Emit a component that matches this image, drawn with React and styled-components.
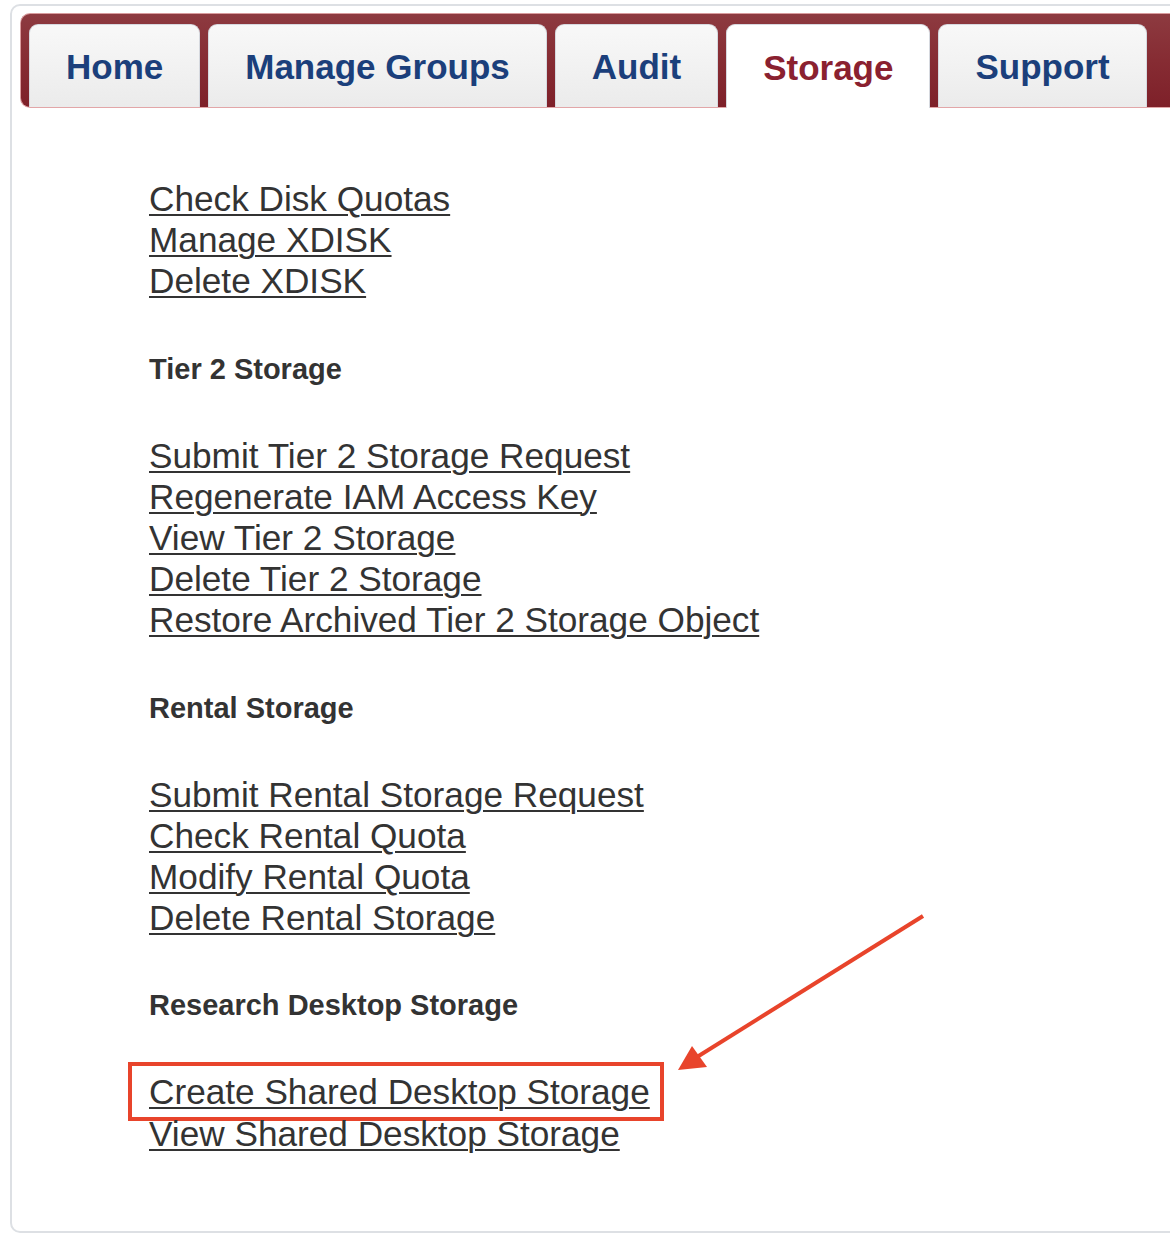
import React from "react"
import styled, { createGlobalStyle } from "styled-components"

const GlobalStyle = createGlobalStyle`
  html, body {
    margin: 0;
    padding: 0;
    background: #fff;
    overflow: hidden;
  }
  body {
    font-family: "Liberation Sans", Arial, sans-serif;
    color: #333;
  }
`

const tabs = ["Home", "Manage Groups", "Audit", "Storage", "Support"]

const sections = [
  {
    title: null,
    links: ["Check Disk Quotas", "Manage XDISK", "Delete XDISK"],
  },
  {
    title: "Tier 2 Storage",
    links: [
      "Submit Tier 2 Storage Request",
      "Regenerate IAM Access Key",
      "View Tier 2 Storage",
      "Delete Tier 2 Storage",
      "Restore Archived Tier 2 Storage Object",
    ],
  },
  {
    title: "Rental Storage",
    links: [
      "Submit Rental Storage Request",
      "Check Rental Quota",
      "Modify Rental Quota",
      "Delete Rental Storage",
    ],
  },
  {
    title: "Research Desktop Storage",
    links: ["Create Shared Desktop Storage", "View Shared Desktop Storage"],
  },
]

const highlighted = "Create Shared Desktop Storage"

const App = () => (
  <Page>
    <GlobalStyle />
    <Frame>
      <TabBar>
        {tabs.map(t => (
          <Tab key={t} active={t === "Storage"}>{t}</Tab>
        ))}
      </TabBar>
      <Content>
        {sections.map((s, i) => (
          <React.Fragment key={i}>
            {s.title && <SectionTitle>{s.title}</SectionTitle>}
            <LinkList>
              {s.links.map(l => (
                <LinkItem key={l} highlight={l === highlighted}>
                  <NavLink href="#">{l}</NavLink>
                </LinkItem>
              ))}
            </LinkList>
          </React.Fragment>
        ))}
      </Content>
    </Frame>
    <Arrow width="1170" height="1248" viewBox="0 0 1170 1248">
      <line x1="923" y1="916" x2="697" y2="1057" stroke="#e8442b" strokeWidth="4" />
      <polygon points="678,1070 692,1046 707,1067" fill="#e8442b" />
    </Arrow>
  </Page>
)

export default App

const Page = styled.div`
  position: relative;
  width: 1170px;
  height: 1248px;
  padding: 4px 0 0 10px;
  box-sizing: border-box;
`

const Frame = styled.div`
  margin-right: -40px;
  border: 2px solid #dde0e4;
  border-radius: 10px;
  padding: 7px 0 0 8px;
  background: #fff;
`

const TabBar = styled.div`
  display: flex;
  align-items: flex-end;
  gap: 8px;
  padding: 10px 0 0 8px;
  border: 1px solid #d99c9e;
  border-right: none;
  border-bottom: 1px solid #e2a6a8;
  border-radius: 10px 0 0 10px;
  background: linear-gradient(to bottom, #8d3a40 0%, #862c33 50%, #7e2029 100%);
`

const Tab = styled.div`
  display: flex;
  align-items: center;
  justify-content: center;
  box-sizing: border-box;
  height: ${props => (props.active ? "84px" : "83px")};
  margin-bottom: ${props => (props.active ? "-1px" : "0")};
  padding: 2px 36px 0;
  border: 1px solid #d6d9df;
  border-bottom: none;
  border-radius: 9px 9px 0 0;
  background: ${props =>
    props.active ? "#fff" : "linear-gradient(to bottom, #f8f8f8 0%, #f3f3f3 40%, #ebebeb 100%)"};
  color: ${props => (props.active ? "#8a2130" : "#1b3f7b")};
  font-size: 35px;
  font-weight: bold;
  white-space: nowrap;
`

const Content = styled.div`
  padding: 70px 0 77px 129px;
`

const SectionTitle = styled.h4`
  margin: 51px 0 50px;
  font-size: 29px;
  line-height: 32px;
  font-weight: bold;
  color: #333;
`

const LinkList = styled.div`
  display: flex;
  flex-direction: column;
  align-items: flex-start;
`

const LinkItem = styled.div`
  position: relative;
  font-size: 35.2px;
  line-height: 41.2px;

  &::before {
    content: "";
    display: ${props => (props.highlight ? "block" : "none")};
    position: absolute;
    top: -9px;
    bottom: -8px;
    left: -21px;
    right: -14px;
    border: 4px solid #e8442b;
    pointer-events: none;
  }
`

const NavLink = styled.a`
  color: #333;
  text-decoration: underline;
  text-decoration-thickness: 2px;
  text-underline-offset: 3px;
`

const Arrow = styled.svg`
  position: absolute;
  top: 0;
  left: 0;
  pointer-events: none;
`
